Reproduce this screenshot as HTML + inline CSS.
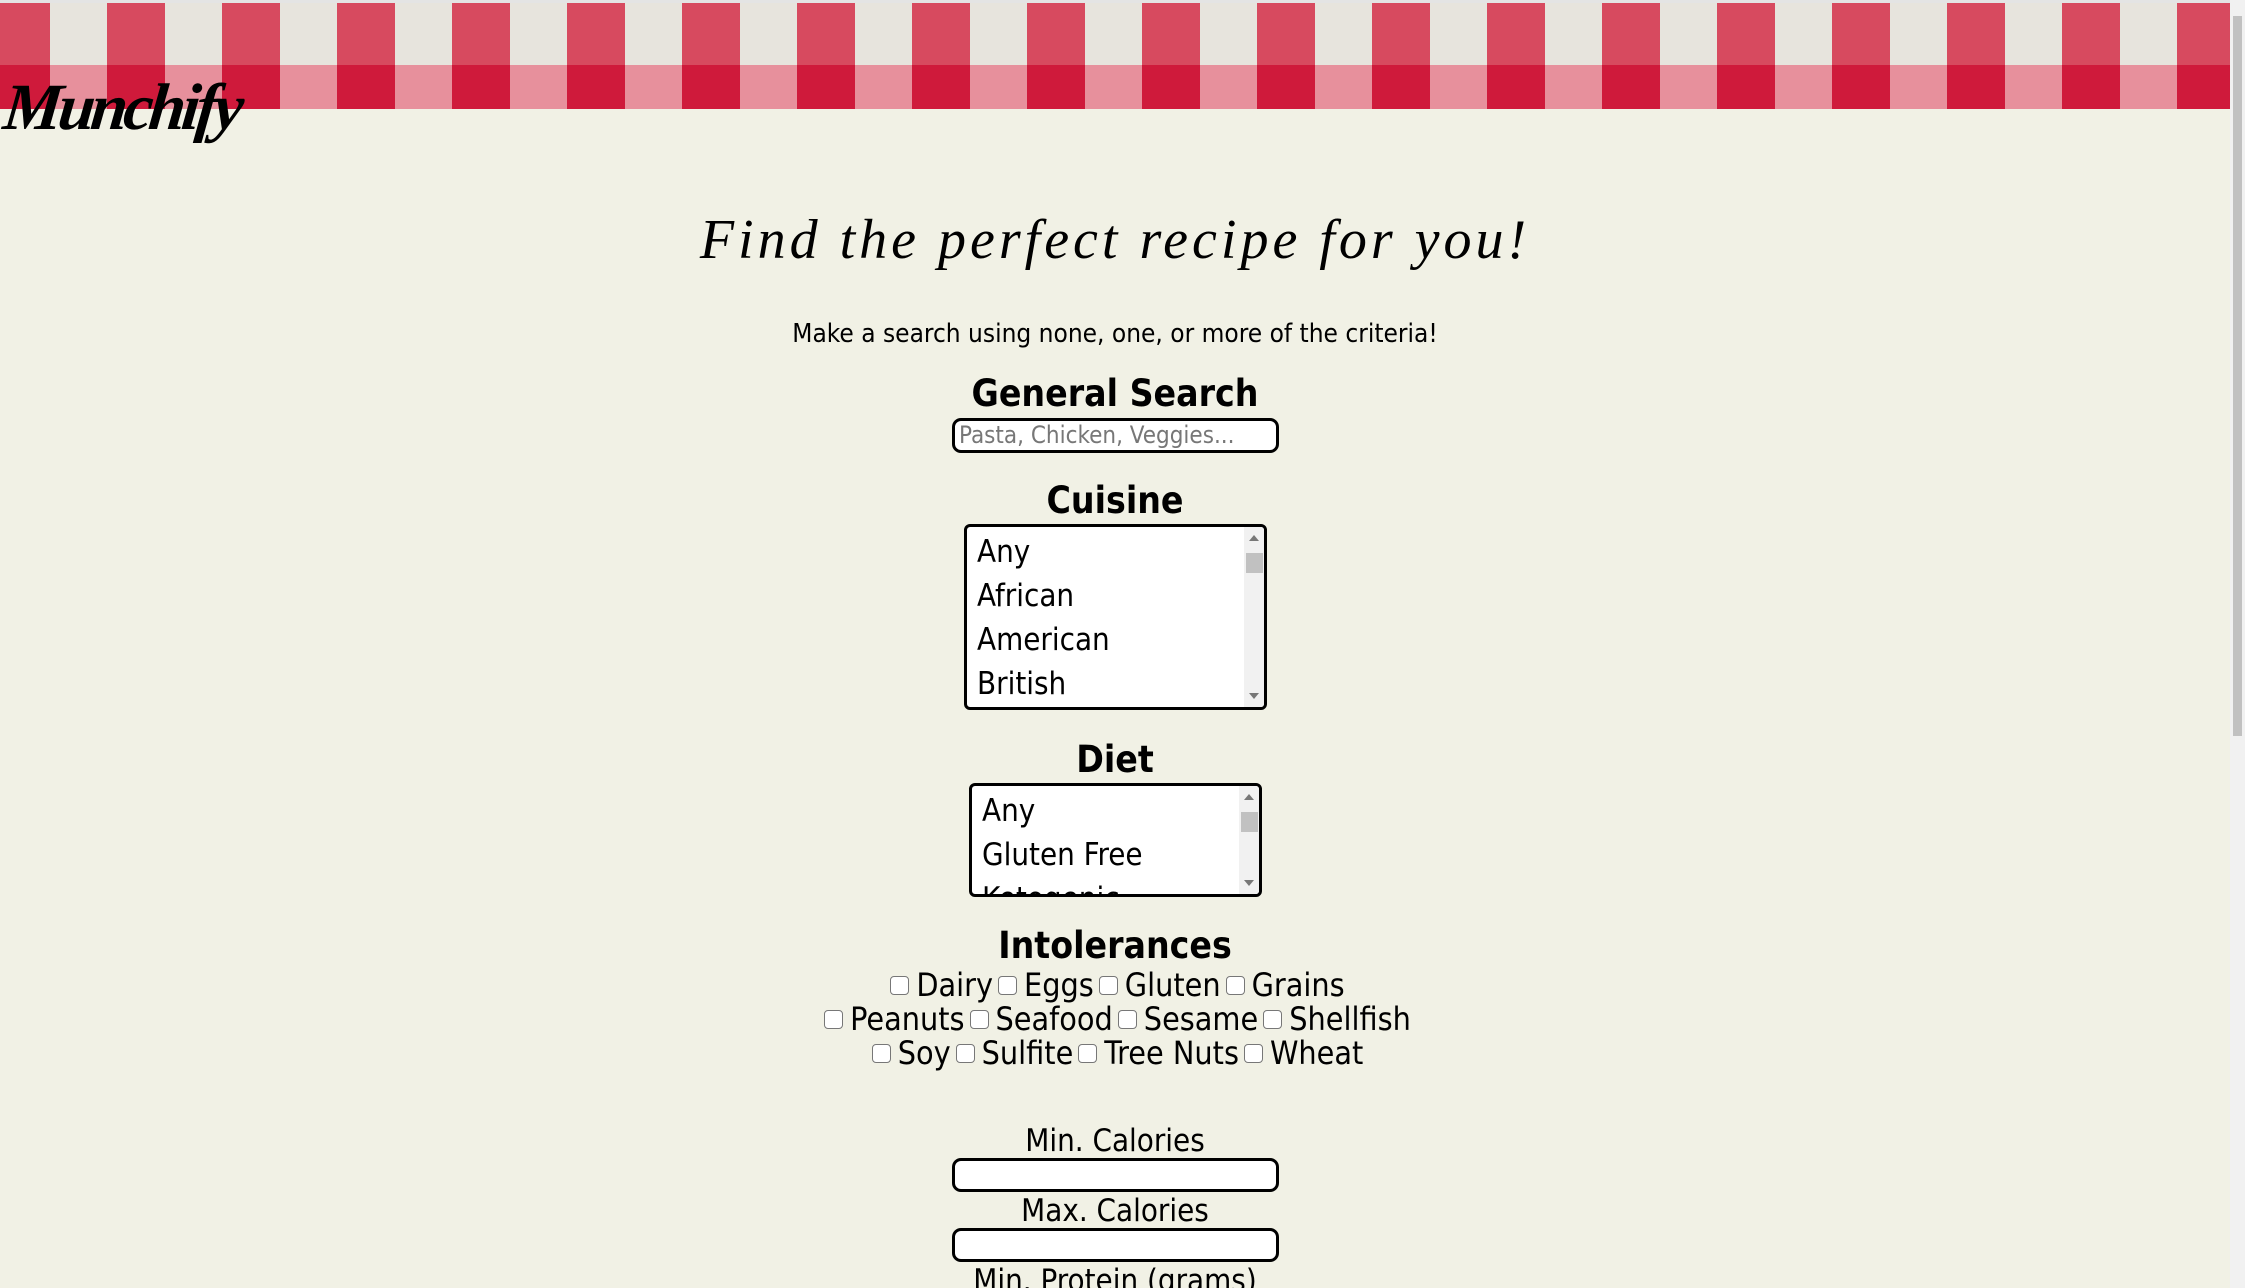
<!DOCTYPE html>
<html><head><meta charset="utf-8"><style>
*{margin:0;padding:0;box-sizing:border-box}
html,body{width:2245px;height:1288px;overflow:hidden}
body{background:#f1f1e5;font-family:"DejaVu Sans Condensed","DejaVu Sans","Liberation Sans",sans-serif;color:#000;position:relative}
.band{position:absolute;left:0;top:3px;width:2230px;height:106px;overflow:hidden}
.row1{position:absolute;left:0;top:0;width:100%;height:62px;background:repeating-linear-gradient(90deg,#d74a5f 0,#d74a5f 50px,#e7e4dd 50px,#e7e4dd 107px,#d74a5f 107px,#d74a5f 115px)}
.row2{position:absolute;left:0;top:62px;width:100%;height:44px;background:repeating-linear-gradient(90deg,#cf1a3b 0,#cf1a3b 50px,#e7909c 50px,#e7909c 107px,#cf1a3b 107px,#cf1a3b 115px)}
.topline{position:absolute;left:0;top:0;width:2245px;height:3px;background:#e4e4e4}
.sb{position:absolute;right:0;top:0;width:15px;height:1288px;background:#f1f1f1}
.sb i{position:absolute;left:3px;top:16px;width:9px;height:720px;background:#c1c1c1}
.logo{position:absolute;left:4px;top:70px;font-family:"Liberation Serif",serif;font-style:italic;font-weight:bold;font-size:66px;letter-spacing:-4px;transform:skewX(-6deg)}
.c{position:absolute;left:0;width:2230px;text-align:center;white-space:nowrap}
.title{top:208px;font-family:"Liberation Serif",serif;font-style:italic;font-size:56px;letter-spacing:4px}
.sub{top:319px;font-size:26px}
h2{font-size:37px;font-weight:bold}
.inp{position:absolute;border:3px solid #000;border-radius:9px;background:#fff}
.sel{position:absolute;border:3px solid #000;border-radius:6px;background:#fff;overflow:hidden}
.sel .o{font-size:31px;height:44px;line-height:44px;padding-left:10px}
.sel .s{position:absolute;right:0;top:0;bottom:0;width:20px;background:#f1f1f1}
.sel .s b{position:absolute;left:2px;top:26px;width:17px;height:20px;background:#c1c1c1}
.sel .s u{position:absolute;left:5px;width:0;height:0;border-left:5px solid transparent;border-right:5px solid transparent}
.up{top:8px;border-bottom:6px solid #777}
.dn{bottom:8px;border-top:6px solid #777}
.cb{display:inline-block;width:19px;height:19px;border:1px solid #777;border-radius:4px;background:#fff;vertical-align:middle;margin:0 7px 4px 5px}
.cr{font-size:32px;line-height:34px}
.lab{font-size:31px}
</style></head><body>
<div class="topline"></div>
<div class="band"><div class="row1"></div><div class="row2"></div></div>
<div class="logo">Munchify</div>
<div class="sb"><i></i></div>
<div class="c title">Find the perfect recipe for you!</div>
<div class="c sub">Make a search using none, one, or more of the criteria!</div>
<div class="c" style="top:372px"><h2>General Search</h2></div>
<div class="inp" style="left:952px;top:418px;width:327px;height:35px;font-size:24px;color:#777;padding-left:4px;line-height:28px">Pasta, Chicken, Veggies...</div>
<div class="c" style="top:479px"><h2>Cuisine</h2></div>
<div class="sel" style="left:964px;top:524px;width:303px;height:186px;padding-top:3px">
<div class="o">Any</div><div class="o">African</div><div class="o">American</div><div class="o">British</div>
<div class="s"><u class="up"></u><b></b><u class="dn"></u></div></div>
<div class="c" style="top:738px"><h2>Diet</h2></div>
<div class="sel" style="left:969px;top:783px;width:293px;height:114px;padding-top:3px">
<div class="o">Any</div><div class="o">Gluten Free</div><div class="o">Ketogenic</div>
<div class="s"><u class="up"></u><b></b><u class="dn"></u></div></div>
<div class="c" style="top:924px"><h2>Intolerances</h2></div>
<div class="c cr" style="top:968px"><span class="cb"></span>Dairy<span class="cb"></span>Eggs<span class="cb"></span>Gluten<span class="cb"></span>Grains</div>
<div class="c cr" style="top:1002px"><span class="cb"></span>Peanuts<span class="cb"></span>Seafood<span class="cb"></span>Sesame<span class="cb"></span>Shellfish</div>
<div class="c cr" style="top:1036px"><span class="cb"></span>Soy<span class="cb"></span>Sulfite<span class="cb"></span>Tree Nuts<span class="cb"></span>Wheat</div>
<div class="c lab" style="top:1123px">Min. Calories</div>
<div class="inp" style="left:952px;top:1158px;width:327px;height:34px"></div>
<div class="c lab" style="top:1193px">Max. Calories</div>
<div class="inp" style="left:952px;top:1228px;width:327px;height:34px"></div>
<div class="c lab" style="top:1263px">Min. Protein (grams)</div>
</body></html>
